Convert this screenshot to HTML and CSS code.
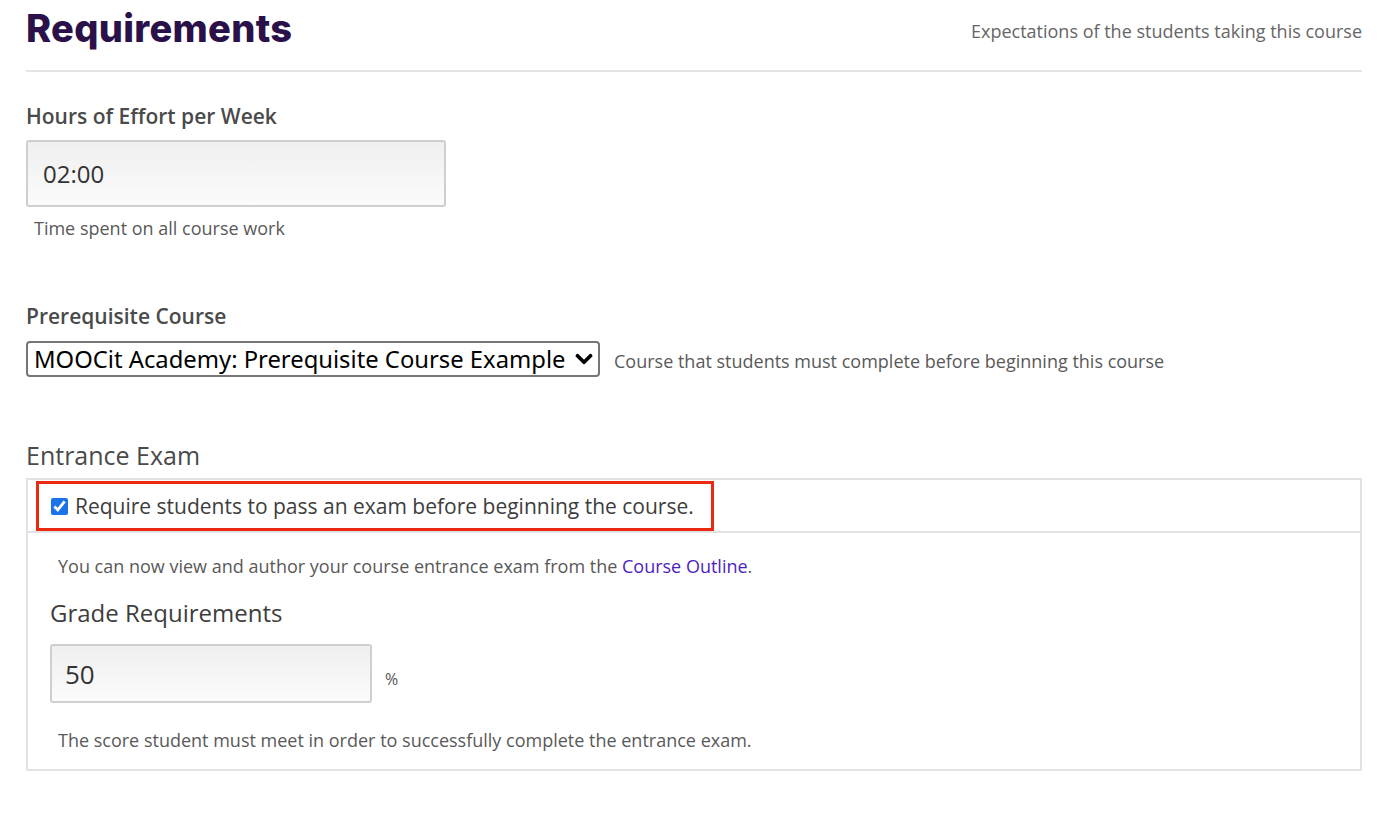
FILE: index.html
```html
<!DOCTYPE html>
<html lang="en">
<head>
<meta charset="utf-8">
<title>Requirements</title>
<link rel="stylesheet" href="styles.css">
</head>
<body>
<main class="page">
  <header class="section-header">
    <h1 class="title">Requirements</h1>
    <span class="subtitle">Expectations of the students taking this course</span>
  </header>

  <div class="field field-effort">
    <label class="field-label" for="effort">Hours of Effort per Week</label>
    <input class="text-input effort-input" id="effort" type="text" value="02:00">
    <p class="help help-effort">Time spent on all course work</p>
  </div>

  <div class="field field-prereq">
    <label class="field-label" for="prereq">Prerequisite Course</label>
    <div class="select-row">
      <div class="select-wrap">
        <select class="select" id="prereq">
          <option>MOOCit Academy: Prerequisite Course Example</option>
        </select>
        <svg class="chevron" viewBox="0 0 16 12" width="18" height="13" aria-hidden="true"><path d="M2 2.5 L8 8.5 L14 2.5" fill="none" stroke="#000" stroke-width="3.4" stroke-linecap="round" stroke-linejoin="round"/></svg>
      </div>
      <span class="help help-inline">Course that students must complete before beginning this course</span>
    </div>
  </div>

  <div class="field field-exam">
    <div class="exam-label">Entrance Exam</div>
    <div class="exam-box">
      <div class="exam-top">
        <label class="highlight">
          <input class="checkbox" type="checkbox" checked>
          <span class="check-text">Require students to pass an exam before beginning the course.</span>
        </label>
      </div>
      <div class="exam-body">
        <p class="help exam-note">You can now view and author your course entrance exam from the <a class="link" href="#">Course Outline</a>.</p>
        <div class="grade-label">Grade Requirements</div>
        <div class="grade-row">
          <input class="text-input grade-input" type="text" value="50">
          <span class="percent">%</span>
        </div>
        <p class="help exam-note score-note">The score student must meet in order to successfully complete the entrance exam.</p>
      </div>
    </div>
  </div>
</main>
</body>
</html>
```

FILE: styles.css
```css
* { box-sizing: border-box; }

html, body {
  margin: 0;
  padding: 0;
  background: #ffffff;
}

body {
  font-family: "Open Sans", "Noto Sans", "Liberation Sans", sans-serif;
  color: #333333;
}

.page {
  width: 1336px;
  margin-left: 26px;
}

.section-header {
  display: flex;
  justify-content: space-between;
  align-items: flex-start;
  height: 72px;
  border-bottom: 2px solid #e4e4e4;
}

.title {
  margin: 6px 0 0 0;
  font-family: "Inter", "Lato", "Liberation Sans", sans-serif;
  font-weight: 800;
  font-size: 38px;
  line-height: 44px;
  color: #2a1149;
  letter-spacing: 0.3px;
}

.subtitle {
  margin-top: 19px;
  font-size: 18px;
  line-height: 24px;
  color: #666666;
}

.field-label {
  display: block;
  font-size: 21px;
  font-weight: 600;
  line-height: 26px;
  color: #4a4a4a;
}

.field-effort { padding-top: 31px; }

.text-input {
  display: block;
  border: 2px solid #cfcfcf;
  border-radius: 3px;
  background: linear-gradient(#efefef, #fbfbfb);
  font-family: "Open Sans", "Noto Sans", "Liberation Sans", sans-serif;
  color: #333333;
  outline: none;
}

.effort-input {
  margin-top: 11px;
  width: 420px;
  height: 67px;
  padding: 0 15px;
  font-size: 24px;
}

.help {
  margin: 0;
  font-size: 18px;
  line-height: 24px;
  color: #595959;
}

.help-effort {
  margin-top: 9px;
  padding-left: 8px;
}

.field-prereq { padding-top: 63px; }

.select-row {
  display: flex;
  align-items: center;
  margin-top: 12px;
}

.select-wrap {
  position: relative;
  width: 574px;
  height: 36px;
}

.select {
  appearance: none;
  -webkit-appearance: none;
  width: 100%;
  height: 100%;
  margin: 0;
  padding: 0 28px 0 6px;
  border: 2px solid #767676;
  border-radius: 4px;
  background: #ffffff;
  font-family: "Noto Sans", "Open Sans", sans-serif;
  font-size: 23.8px;
  color: #000000;
  outline: none;
}

.chevron {
  position: absolute;
  right: 7px;
  top: 12px;
}

.help-inline {
  margin-left: 14px;
  padding-top: 4px;
}

.field-exam { padding-top: 63px; }

.exam-label {
  font-size: 25px;
  font-weight: 500;
  line-height: 30px;
  color: #4a4a4a;
}

.exam-box {
  margin-top: 8px;
  border: 2px solid #e2e2e2;
}

.exam-top {
  padding: 1px 8px 0 8px;
  border-bottom: 2px solid #e2e2e2;
}

.highlight {
  display: inline-flex;
  align-items: center;
  height: 50px;
  padding: 0 17px 0 12px;
  border: 3px solid #ea2a12;
}

.checkbox {
  width: 17px;
  height: 17px;
  margin: 0 7px 0 0;
  accent-color: #1a73e8;
}

.check-text {
  font-size: 21px;
  line-height: 28px;
  color: #3d3d3d;
}

.exam-body {
  padding: 21px 22px 17px 22px;
}

.exam-note { padding-left: 8px; }

.link {
  color: #4b1ec0;
  text-decoration: none;
}

.grade-label {
  margin-top: 20px;
  font-size: 24px;
  line-height: 30px;
  color: #3d3d3d;
}

.grade-row {
  display: flex;
  align-items: center;
  margin-top: 16px;
}

.grade-input {
  width: 322px;
  height: 59px;
  padding: 0 13px;
  font-size: 26px;
}

.percent {
  margin-left: 13px;
  padding-top: 10px;
  font-size: 16px;
  color: #555555;
}

.score-note { margin-top: 25px; }
```
